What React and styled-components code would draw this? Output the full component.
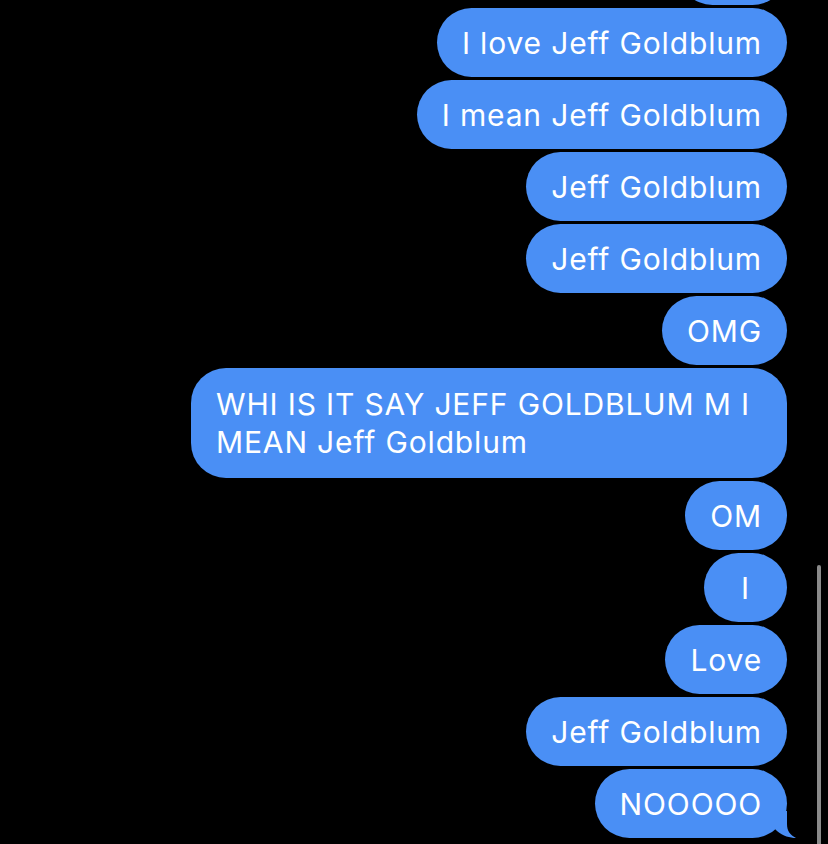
import styled, { createGlobalStyle } from "styled-components";

const GlobalStyle = createGlobalStyle`
  html, body {
    margin: 0;
    padding: 0;
    background: #000;
  }
`;

const Screen = styled.div`
  position: relative;
  width: 828px;
  height: 844px;
  background: #000;
  overflow: hidden;
`;

const Thread = styled.div`
  height: 100%;
  box-sizing: border-box;
  display: flex;
  flex-direction: column;
  justify-content: flex-end;
  align-items: flex-end;
  gap: 3px;
  padding: 0 41px 6px 0;
`;

const Bubble = styled.div`
  position: relative;
  box-sizing: border-box;
  max-width: 596px;
  min-width: 83px;
  padding: ${({ $multi }) => ($multi ? "17px" : "15.5px")} 25px;
  border-radius: 35px;
  background: #4a8ff5;
  color: #fff;
  font-family: Inter, "Liberation Sans", sans-serif;
  font-size: 30px;
  letter-spacing: 0.85px;
  line-height: 38px;
  text-align: ${({ $multi }) => ($multi ? "left" : "center")};
`;

const Tail = styled.svg`
  position: absolute;
  right: -12px;
  bottom: 0;
  width: 24px;
  height: 27px;
  overflow: visible;
`;

const ScrollThumb = styled.div`
  position: absolute;
  right: 7px;
  top: 565px;
  width: 4px;
  height: 290px;
  border-radius: 2px;
  background: #8a8a8a;
`;

const messages = [
  { text: "Jeff" },
  { text: "I love Jeff Goldblum" },
  { text: "I mean Jeff Goldblum" },
  { text: "Jeff Goldblum" },
  { text: "Jeff Goldblum" },
  { text: "OMG" },
  { text: "WHI IS IT SAY JEFF GOLDBLUM M I MEAN Jeff Goldblum", multi: true },
  { text: "OM" },
  { text: "I" },
  { text: "Love" },
  { text: "Jeff Goldblum" },
  { text: "NOOOOO", tail: true },
];

export default function App() {
  return (
    <>
      <GlobalStyle />
      <Screen>
        <Thread>
          {messages.map((m, i) => (
            <Bubble key={i} $multi={m.multi}>
              {m.text}
              {m.tail && (
                <Tail viewBox="0 0 24 27">
                  <path
                    d="M0 0 L12 0 L12 13 C12 20 15 24 21 27 C15 27 8 25 2 20 L0 18 Z"
                    fill="#4a8ff5"
                  />
                </Tail>
              )}
            </Bubble>
          ))}
        </Thread>
        <ScrollThumb />
      </Screen>
    </>
  );
}
